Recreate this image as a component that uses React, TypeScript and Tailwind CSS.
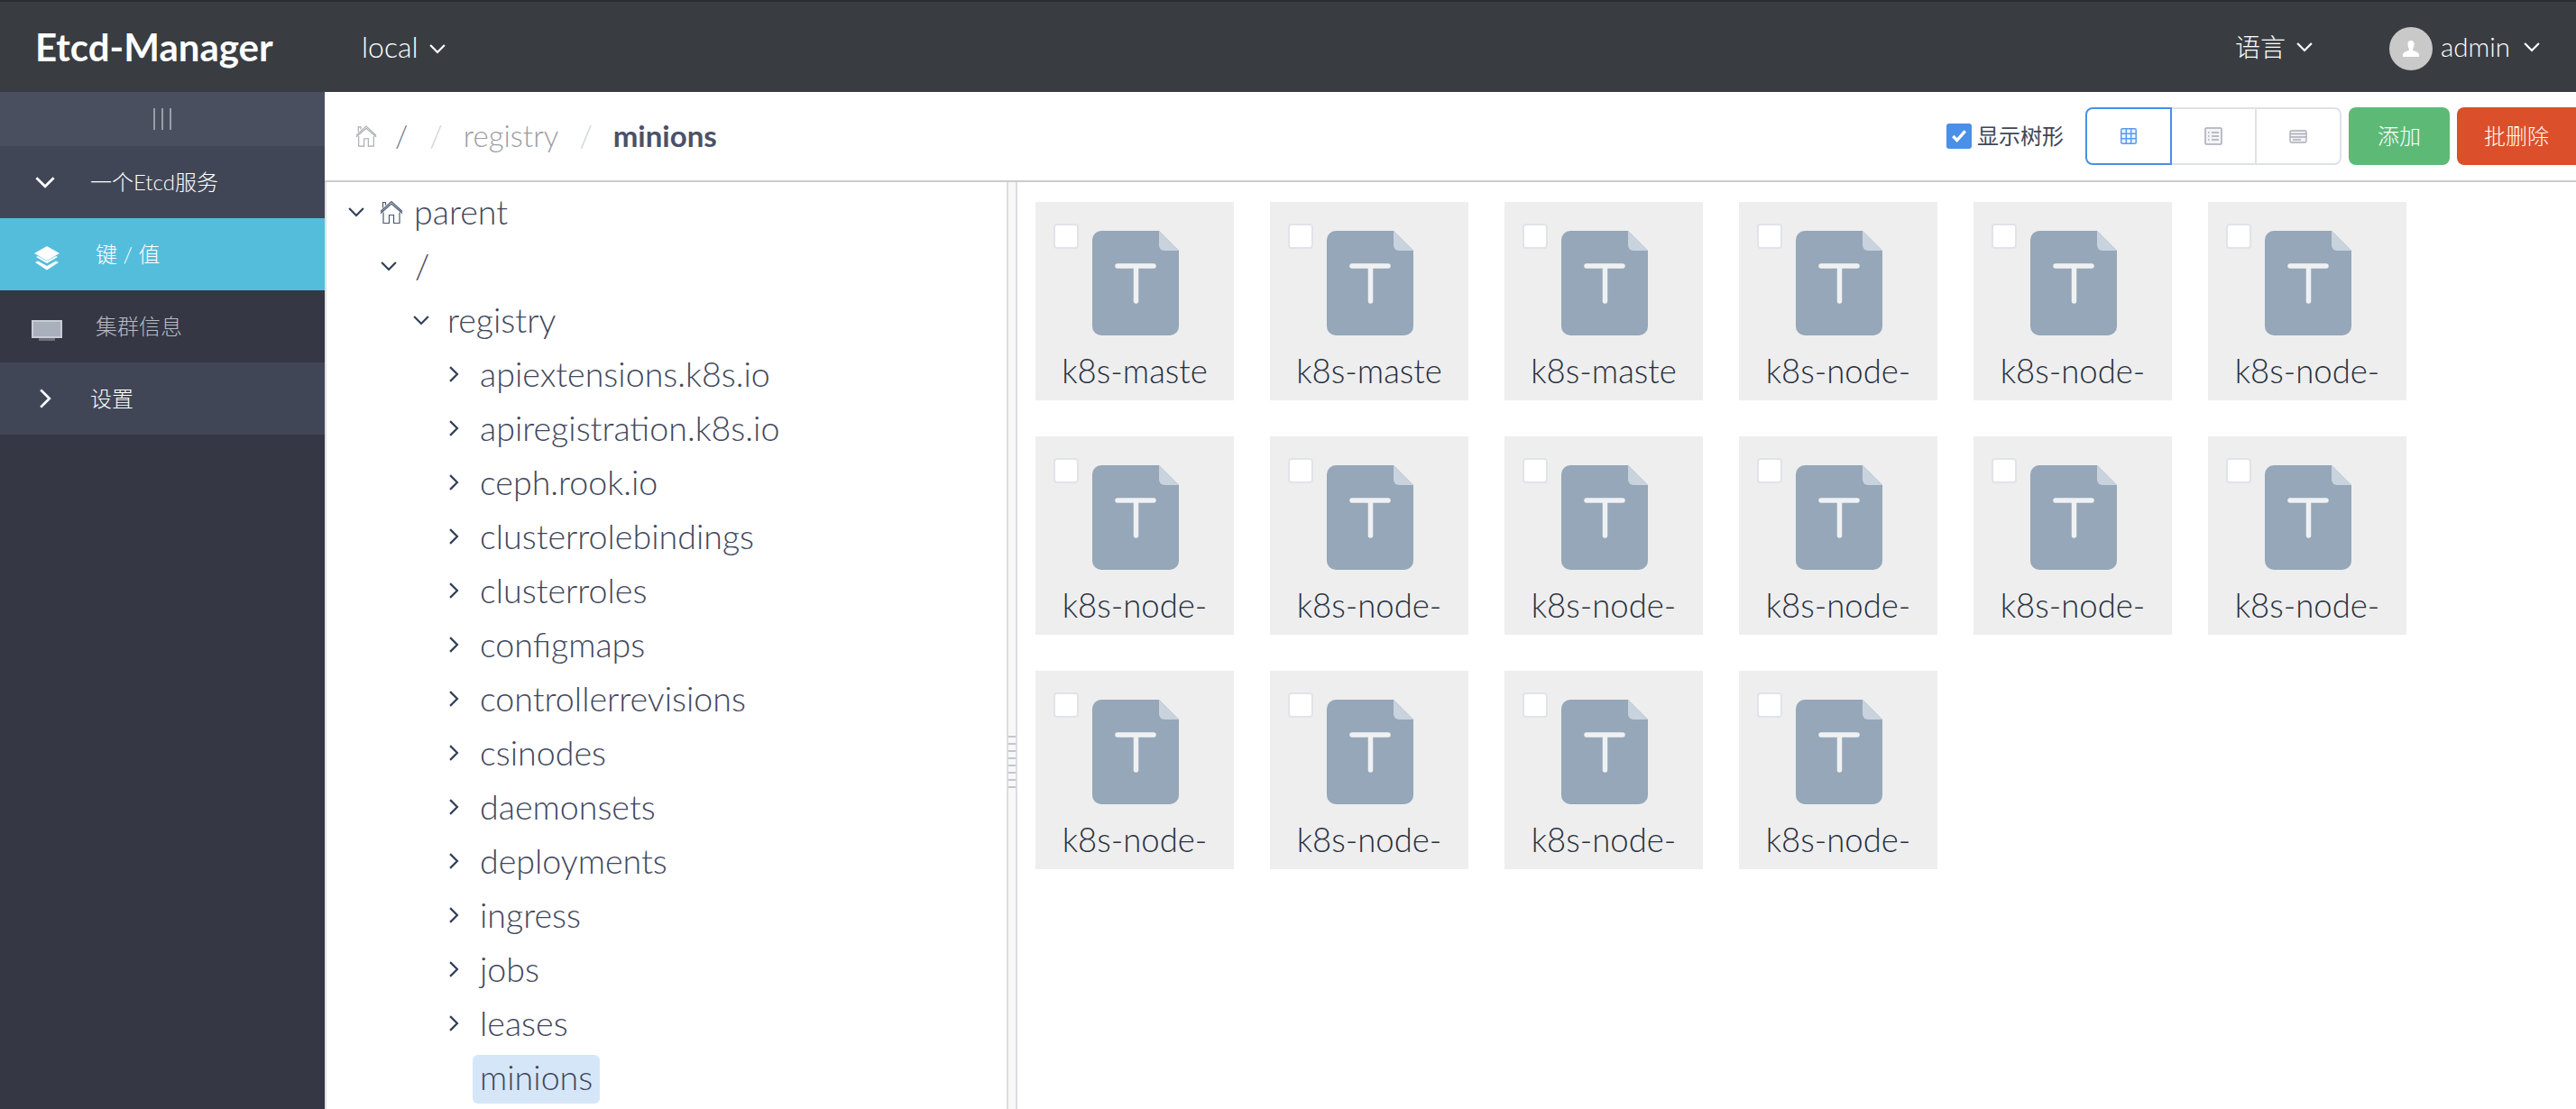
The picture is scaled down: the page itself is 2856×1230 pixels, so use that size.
import { ReactNode } from "react";

const LATO = "font-['Lato','Noto_Sans_CJK_SC',sans-serif]";

const treeRows = [
  "apiextensions.k8s.io",
  "apiregistration.k8s.io",
  "ceph.rook.io",
  "clusterrolebindings",
  "clusterroles",
  "configmaps",
  "controllerrevisions",
  "csinodes",
  "daemonsets",
  "deployments",
  "ingress",
  "jobs",
  "leases",
];

const files = ["k8s-maste", "k8s-maste", "k8s-maste", ...Array(13).fill("k8s-node-")];

function Chevron({ dir = "down", className = "" }: { dir?: "down" | "right"; className?: string }) {
  return (
    <svg viewBox="0 0 16 16" className={className} fill="none" stroke="currentColor" strokeWidth="2">
      {dir === "down" ? <path d="M1 4.500l7 7 7-7" /> : <path d="M4.500 1l7 7-7 7" />}
    </svg>
  );
}

function HomeIcon({ className = "" }: { className?: string }) {
  return (
    <svg viewBox="0 0 26 26" className={className} fill="none" stroke="currentColor" strokeWidth="1.200">
      <path d="M1 12L13 1l12 11M1 14L13 3.500 25 14" />
      <path d="M3.500 8V2h3v3" />
      <path d="M4 13v12h6.500v-9h5v9H22V13" />
    </svg>
  );
}

function FileCard({ name }: { name: string }) {
  return (
    <div className="relative flex h-[220px] w-[220px] flex-col items-center bg-[#eeeeee] pt-[32px]">
      <span className="absolute left-[20px] top-[24px] h-[28px] w-[28px] rounded-[4px] border-2 border-[#e1e3ea] bg-white" />
      <svg viewBox="0 0 96 116" className="ml-[2px] h-[116px] w-[96px]">
        <path d="M10 0h64l22 22v84a10 10 0 0 1-10 10H10a10 10 0 0 1-10-10V10A10 10 0 0 1 10 0z" fill="#95a7b8" />
        <path d="M74 0l22 22H80a6 6 0 0 1-6-6z" fill="#c9d3de" />
        <path d="M28 39h40M48.500 39v39" stroke="#f0f1f3" strokeWidth="5.500" strokeLinecap="round" />
      </svg>
      <div className="mt-[15px] w-full text-center text-[36.5px] leading-[48px] font-light text-[#263040]">{name}</div>
    </div>
  );
}

function TreeRow({ level, open, children, icon }: { level: number; open?: boolean; children: ReactNode; icon?: ReactNode }) {
  const pad = ["pl-[24px]", "pl-[60px]", "pl-[96px]", "pl-[132px]"][level];
  return (
    <div className={`flex h-[60px] items-center ${pad}`}>
      <Chevron dir={open ? "down" : "right"} className="h-[18px] w-[18px] shrink-0 text-[#33405a]" />
      {icon}
      <span className="ml-[20px] text-[37.6px] font-light text-[#3f475c]">{children}</span>
    </div>
  );
}

function SideItem({ bg, icon, label, labelClass }: { bg: string; icon: ReactNode; label: string; labelClass: string }) {
  return (
    <div className={`flex h-[80px] items-center ${bg}`}>
      <div className="flex w-[100px] justify-center">{icon}</div>
      <span className={labelClass}>{label}</span>
    </div>
  );
}

function ViewButton({ active, children, className }: { active?: boolean; children: ReactNode; className: string }) {
  return (
    <div className={`flex h-full items-center justify-center border-2 bg-white ${active ? "border-[#4a8fe8]" : "border-[#e0e1e6]"} ${className}`}>
      {children}
    </div>
  );
}

export default function App() {
  return (
    <div className={`flex h-screen w-screen flex-col overflow-hidden bg-white ${LATO}`}>
      <header className="flex h-[102px] shrink-0 items-center border-t-2 border-[#2b2d30] bg-[#393d42] pl-[39px] text-white">
        <span className="w-[362px] text-[42px] font-bold">Etcd-Manager</span>
        <span className="text-[32px] font-light">local</span>
        <Chevron className="ml-[12px] mt-[4px] h-[18px] w-[18px]" />
        <div className="ml-auto flex items-center pr-[40px]">
          <span className="text-[28px] font-light">语言</span>
          <Chevron className="ml-[12px] h-[18px] w-[18px]" />
          <span className="ml-[85px] mt-[4px] flex h-[48px] w-[48px] items-center justify-center rounded-full bg-[#c9c9c9]">
            <svg viewBox="0 0 20 20" className="h-[18px] w-[18px]" fill="#fff">
              <path d="M10 0c2.800 0 4 2 4 4.500 0 2.500-1.500 5-1.800 7 0 1.500 6.800 2 7.800 5.500v3H0v-3c1-3.500 7.800-4 7.800-5.500C7.500 9.500 6 7 6 4.500 6 2 7.200 0 10 0z" />
            </svg>
          </span>
          <span className="ml-[9px] text-[29.5px] font-light">admin</span>
          <Chevron className="ml-[15px] h-[18px] w-[18px]" />
        </div>
      </header>

      <div className="flex min-h-0 flex-1">
        <aside className="w-[360px] shrink-0 bg-[#353744]">
          <div className="flex h-[60px] items-center justify-center gap-[7px] bg-[#4a4f60]">
            <span className="h-[24px] w-[2px] bg-[#9a9da8]" />
            <span className="h-[24px] w-[2px] bg-[#9a9da8]" />
            <span className="h-[24px] w-[2px] bg-[#9a9da8]" />
          </div>
          <SideItem
            bg="bg-[#414657]"
            icon={<Chevron className="h-[22px] w-[22px] text-white" />}
            label="一个Etcd服务"
            labelClass="text-[24px] font-light text-white"
          />
          <SideItem
            bg="bg-[#55bddc]"
            icon={
              <svg viewBox="0 0 28 27" className="ml-[4px] mt-[8px] h-[27px] w-[28px]" fill="#fff">
                <path d="M14 0l14 8-14 8L0 8z" />
                <path d="M2 12l2-1 10 5.500L24 11l2 1-12 7z" />
                <path d="M1 18l3-1.500 10 5.500 10-5.500 3 1.500-13 8.500z" />
              </svg>
            }
            label="键 / 值"
            labelClass="ml-[6px] text-[24px] font-light text-white"
          />
          <SideItem
            bg="bg-[#353744]"
            icon={
              <svg viewBox="0 0 34 23" className="ml-[4px] mt-[8px] h-[23px] w-[34px]">
                <rect x="0" y="0" width="34" height="20" fill="#c9ccd4" />
                <rect x="2" y="2" width="30" height="16" fill="#aab0bb" />
                <rect x="8" y="20" width="18" height="3" fill="#6f727c" />
              </svg>
            }
            label="集群信息"
            labelClass="ml-[6px] text-[24px] font-light text-[#b9bbc4]"
          />
          <SideItem
            bg="bg-[#414657]"
            icon={<Chevron dir="right" className="h-[22px] w-[22px] text-white" />}
            label="设置"
            labelClass="text-[24px] font-light text-white"
          />
        </aside>

        <main className="flex min-w-0 flex-1 flex-col">
          <div className="flex h-[100px] shrink-0 items-center border-b-2 border-[#cccccc] pl-[34px]">
            <HomeIcon className="h-[24px] w-[24px] text-[#a6a8ad]" />
            <span className="ml-[20px] text-[33px] font-light text-[#6e7380]">/</span>
            <span className="ml-[24px] text-[33px] font-light text-[#cfd1d6]">/</span>
            <span className="ml-[23px] text-[33px] font-light text-[#9a9da6]">registry</span>
            <span className="ml-[23px] text-[33px] font-light text-[#cfd1d6]">/</span>
            <span className="ml-[23px] text-[33px] font-bold text-[#4a5268]">minions</span>

            <div className="ml-auto flex items-center">
              <span className="flex h-[28px] w-[28px] items-center justify-center rounded-[3px] bg-[#4a8fe8]">
                <svg viewBox="0 0 16 16" className="h-[18px] w-[18px]" fill="none" stroke="#fff" strokeWidth="3">
                  <path d="M2 8l4 4 8-9" />
                </svg>
              </span>
              <span className="ml-[6px] text-[24px] text-[#3f4658]">显示树形</span>
              <div className="ml-[24px] flex h-[64px]">
                <ViewButton active className="w-[96px] rounded-l-[8px]">
                  <svg viewBox="0 0 18 18" className="h-[18px] w-[18px]" fill="#eef5fe" stroke="#5b9bee" strokeWidth="1.500">
                    <rect x="0.750" y="0.750" width="16.500" height="16.500" rx="1.500" />
                    <path d="M6.300 1v16M11.700 1v16M1 6.300h16M1 11.700h16" />
                  </svg>
                </ViewButton>
                <ViewButton className="w-[94px] border-l-0">
                  <svg viewBox="0 0 20 20" className="h-[20px] w-[20px]" fill="none" stroke="#a8abb5" strokeWidth="1.500">
                    <rect x="1" y="1" width="18" height="18" rx="1" fill="#f3f4f6" />
                    <path d="M4 6h1.500M8 6h8M4 10h1.500M8 10h8M4 14h1.500M8 14h8" />
                  </svg>
                </ViewButton>
                <ViewButton className="w-[94px] rounded-r-[8px] border-l-0">
                  <svg viewBox="0 0 20 15" className="h-[15px] w-[20px]" fill="none" stroke="#a8abb5" strokeWidth="1.300">
                    <rect x="1" y="1" width="18" height="13" rx="1.500" fill="#f3f4f6" />
                    <path d="M1 4.500h18M1 8h18M4 11h9" />
                  </svg>
                </ViewButton>
              </div>
              <button className="ml-[8px] flex h-[64px] w-[112px] items-center justify-center rounded-[8px] bg-[#5cba76] text-[24px] font-light text-white">添加</button>
              <button className="-mr-[8px] ml-[8px] flex h-[64px] w-[140px] items-center justify-center rounded-[8px] bg-[#db4f2b] pr-[8px] text-[24px] font-light text-white">批删除</button>
            </div>
          </div>

          <div className="flex min-h-0 flex-1 border-l-2 border-[#dfe0e5]">
            <div className="w-[754px] shrink-0 overflow-hidden pt-[3px]">
              <TreeRow
                level={0}
                open
                icon={<HomeIcon className="-mr-[8px] ml-[17px] h-[27px] w-[26px] text-[#4a5a70]" />}
              >
                parent
              </TreeRow>
              <TreeRow level={1} open>/</TreeRow>
              <TreeRow level={2} open>registry</TreeRow>
              {treeRows.map((row) => (
                <TreeRow key={row} level={3}>{row}</TreeRow>
              ))}
              <div className="flex h-[60px] items-end pb-px pl-[162px]">
                <span className="flex h-[54px] items-center rounded-[6px] bg-[#d6e6f9] px-[8px] pb-[3px] text-[37.6px] font-light text-[#3f475c]">minions</span>
              </div>
            </div>
            <div className="relative w-[12px] shrink-0 border-x-2 border-[#dcdde2] bg-[#f8f8f8]">
              <div className="absolute left-0 top-[614px] h-[58px] w-full bg-[repeating-linear-gradient(#c5c6ce_0,#c5c6ce_2px,transparent_2px,transparent_8px)]" />
            </div>
            <div className="flex-1 pl-[20px] pt-[22px]">
              <div className="grid grid-cols-[repeat(6,220px)] gap-[40px]">
                {files.map((name, i) => (
                  <FileCard key={i} name={name} />
                ))}
              </div>
            </div>
          </div>
        </main>
      </div>
    </div>
  );
}
